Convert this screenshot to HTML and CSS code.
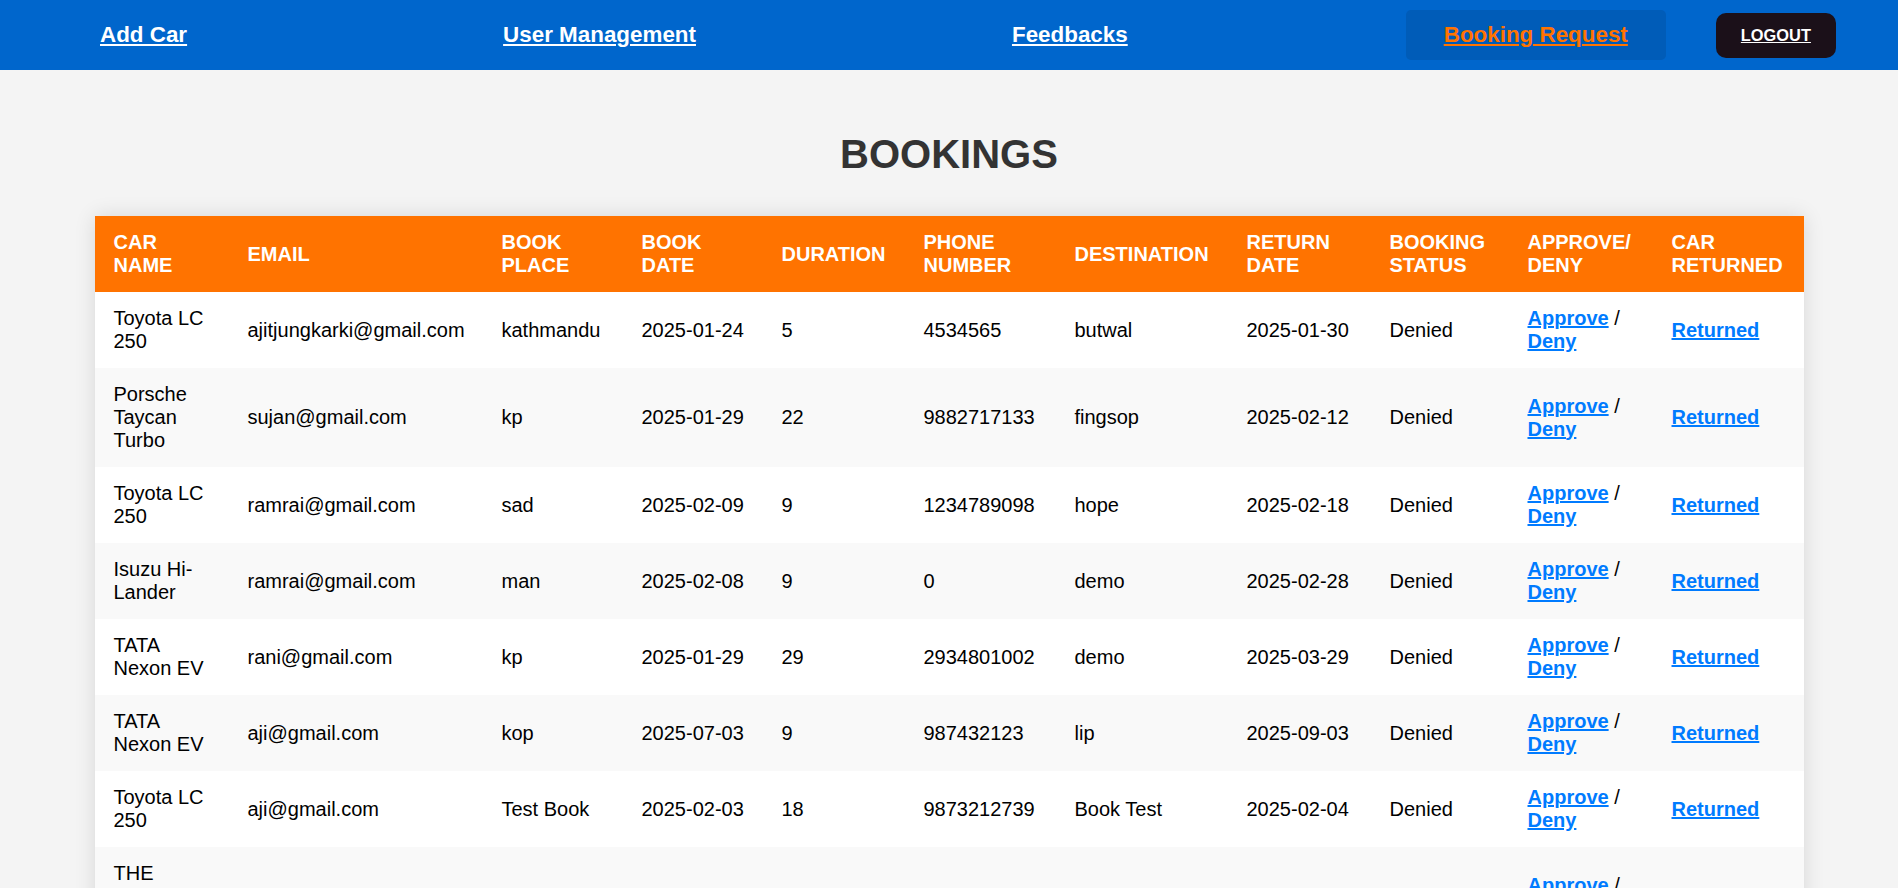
FILE: index.html
```html
<!DOCTYPE html>
<html lang="en">
<head>
<meta charset="utf-8">
<title>Bookings</title>
<link rel="stylesheet" href="styles.css">
</head>
<body>
<nav class="topnav">
  <div class="nav-links">
    <a class="nav-item" href="#">Add Car</a>
    <a class="nav-item" href="#">User Management</a>
    <a class="nav-item" href="#">Feedbacks</a>
    <a class="nav-item active" href="#">Booking Request</a>
  </div>
  <a class="logout" href="#">LOGOUT</a>
</nav>
<main class="content">
  <h1 class="title">BOOKINGS</h1>
  <table class="bookings">
    <thead>
      <tr>
        <th>Car Name</th>
        <th>Email</th>
        <th>Book Place</th>
        <th>Book Date</th>
        <th>Duration</th>
        <th>Phone Number</th>
        <th>Destination</th>
        <th>Return Date</th>
        <th>Booking Status</th>
        <th>Approve/ Deny</th>
        <th>Car Returned</th>
      </tr>
    </thead>
    <tbody>
      <tr>
        <td>Toyota LC 250</td><td>ajitjungkarki@gmail.com</td><td>kathmandu</td><td class="nw">2025-01-24</td><td>5</td><td>4534565</td><td>butwal</td><td class="nw">2025-01-30</td><td>Denied</td>
        <td><a class="act" href="#">Approve</a> / <a class="act" href="#">Deny</a></td><td><a class="act" href="#">Returned</a></td>
      </tr>
      <tr>
        <td>Porsche Taycan Turbo</td><td>sujan@gmail.com</td><td>kp</td><td class="nw">2025-01-29</td><td>22</td><td>9882717133</td><td>fingsop</td><td class="nw">2025-02-12</td><td>Denied</td>
        <td><a class="act" href="#">Approve</a> / <a class="act" href="#">Deny</a></td><td><a class="act" href="#">Returned</a></td>
      </tr>
      <tr>
        <td>Toyota LC 250</td><td>ramrai@gmail.com</td><td>sad</td><td class="nw">2025-02-09</td><td>9</td><td>1234789098</td><td>hope</td><td class="nw">2025-02-18</td><td>Denied</td>
        <td><a class="act" href="#">Approve</a> / <a class="act" href="#">Deny</a></td><td><a class="act" href="#">Returned</a></td>
      </tr>
      <tr>
        <td>Isuzu Hi-Lander</td><td>ramrai@gmail.com</td><td>man</td><td class="nw">2025-02-08</td><td>9</td><td>0</td><td>demo</td><td class="nw">2025-02-28</td><td>Denied</td>
        <td><a class="act" href="#">Approve</a> / <a class="act" href="#">Deny</a></td><td><a class="act" href="#">Returned</a></td>
      </tr>
      <tr>
        <td>TATA Nexon EV</td><td>rani@gmail.com</td><td>kp</td><td class="nw">2025-01-29</td><td>29</td><td>2934801002</td><td>demo</td><td class="nw">2025-03-29</td><td>Denied</td>
        <td><a class="act" href="#">Approve</a> / <a class="act" href="#">Deny</a></td><td><a class="act" href="#">Returned</a></td>
      </tr>
      <tr>
        <td>TATA Nexon EV</td><td>aji@gmail.com</td><td>kop</td><td class="nw">2025-07-03</td><td>9</td><td>987432123</td><td>lip</td><td class="nw">2025-09-03</td><td>Denied</td>
        <td><a class="act" href="#">Approve</a> / <a class="act" href="#">Deny</a></td><td><a class="act" href="#">Returned</a></td>
      </tr>
      <tr>
        <td>Toyota LC 250</td><td>aji@gmail.com</td><td>Test Book</td><td class="nw">2025-02-03</td><td>18</td><td>9873212739</td><td>Book Test</td><td class="nw">2025-02-04</td><td>Denied</td>
        <td><a class="act" href="#">Approve</a> / <a class="act" href="#">Deny</a></td><td><a class="act" href="#">Returned</a></td>
      </tr>
      <tr>
        <td>THE Mercedes Benz</td><td>aji@gmail.com</td><td>kp</td><td class="nw">2025-02-10</td><td>4</td><td>9841234567</td><td>pokhara</td><td class="nw">2025-02-14</td><td>Denied</td>
        <td><a class="act" href="#">Approve</a> / <a class="act" href="#">Deny</a></td><td><a class="act" href="#">Returned</a></td>
      </tr>
    </tbody>
  </table>
</main>
</body>
</html>
```

FILE: styles.css
```css
* { box-sizing: border-box; }

html, body {
  margin: 0;
  padding: 0;
}

body {
  background: #f4f4f4;
  font-family: "Liberation Sans", Arial, sans-serif;
  color: #000;
}

.topnav {
  height: 70px;
  background: #0066cc;
  display: flex;
  align-items: center;
  padding-left: 100px;
}

.nav-links {
  display: flex;
  align-items: center;
}

.nav-item {
  color: #fff;
  font-weight: bold;
  font-size: 22.4px;
  text-decoration: underline;
}

.nav-item + .nav-item {
  margin-left: 316px;
}

.nav-item.active {
  margin-left: 278px;
  color: #ff7300;
  background: #005cb8;
  padding: 12px 38px;
  border-radius: 5px;
}

.logout {
  margin-left: 50px;
  background: #1b1019;
  color: #fff;
  font-weight: bold;
  font-size: 16.4px;
  padding: 13px 25px;
  border-radius: 10px;
  text-decoration: underline;
}

.content {
  padding: 0 0 40px;
}

.title {
  text-align: center;
  color: #333;
  font-size: 40px;
  font-weight: bold;
  margin: 62px 0 39px;
  line-height: normal;
}

.bookings {
  width: 1709px;
  margin: 0 auto;
  border-collapse: collapse;
  table-layout: fixed;
  background: #fff;
  box-shadow: 0 0 20px rgba(0, 0, 0, 0.12);
  font-size: 20px;
}

.bookings th,
.bookings td {
  padding: 15px 19px;
  text-align: left;
  line-height: normal;
}

.bookings td.nw {
  white-space: nowrap;
}

.bookings th {
  background: #ff7300;
  color: #fff;
  font-weight: bold;
  text-transform: uppercase;
}

.bookings tbody tr:nth-child(even) {
  background: #f9f9f9;
}

.bookings th:nth-child(1) { width: 134px; }
.bookings th:nth-child(2) { width: 254px; }
.bookings th:nth-child(3) { width: 140px; }
.bookings th:nth-child(4) { width: 140px; }
.bookings th:nth-child(5) { width: 142px; }
.bookings th:nth-child(6) { width: 151px; }
.bookings th:nth-child(7) { width: 172px; }
.bookings th:nth-child(8) { width: 143px; }
.bookings th:nth-child(9) { width: 138px; }
.bookings th:nth-child(10) { width: 144px; }

.act {
  color: #007bff;
  font-weight: bold;
  text-decoration: underline;
}
```
